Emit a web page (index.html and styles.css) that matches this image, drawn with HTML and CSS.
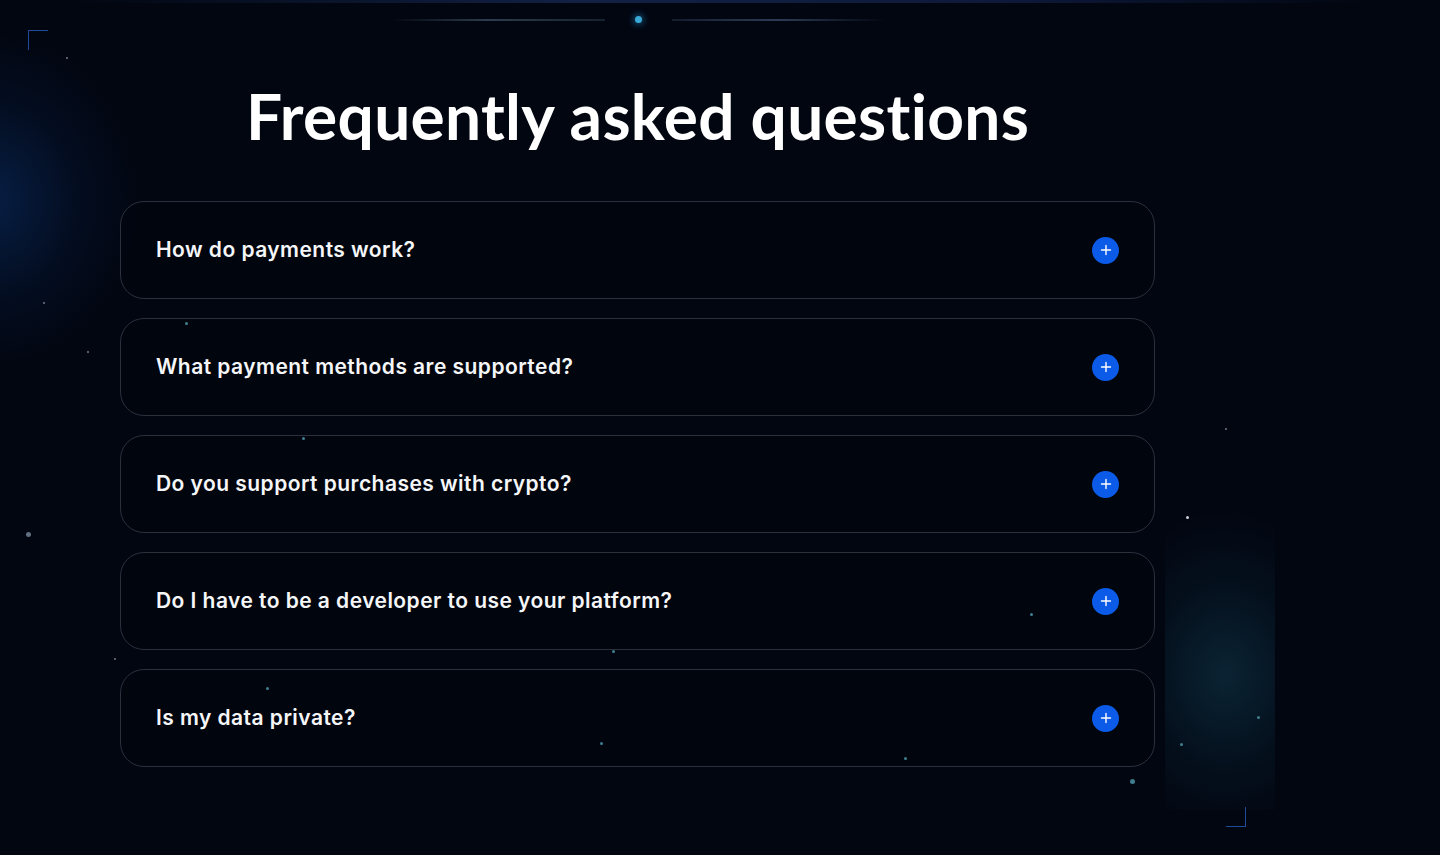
FILE: index.html
```html
<!DOCTYPE html>
<html lang="en">
<head>
<meta charset="utf-8">
<title>FAQ</title>
<link rel="stylesheet" href="styles.css">
</head>
<body>
<div class="page">
  <div class="topline"></div>
  <div class="glow glow-left"></div>
  <div class="glow glow-right"></div>
  <div class="deco-top">
    <span class="dline dline-l"></span>
    <span class="ddot"></span>
    <span class="dline dline-r"></span>
  </div>
  <span class="corner corner-tl"></span>
  <span class="corner corner-br"></span>

  <main class="faq">
    <h1 class="title">Frequently asked questions</h1>
    <ul class="list">
      <li class="item"><span class="q">How do payments work?</span><span class="plus"><svg viewBox="0 0 12 12" width="12" height="12"><path d="M6 1.5v9M1.5 6h9" stroke="#fff" stroke-width="1.4" stroke-linecap="round"/></svg></span></li>
      <li class="item"><span class="q">What payment methods are supported?</span><span class="plus"><svg viewBox="0 0 12 12" width="12" height="12"><path d="M6 1.5v9M1.5 6h9" stroke="#fff" stroke-width="1.4" stroke-linecap="round"/></svg></span></li>
      <li class="item"><span class="q">Do you support purchases with crypto?</span><span class="plus"><svg viewBox="0 0 12 12" width="12" height="12"><path d="M6 1.5v9M1.5 6h9" stroke="#fff" stroke-width="1.4" stroke-linecap="round"/></svg></span></li>
      <li class="item"><span class="q">Do I have to be a developer to use your platform?</span><span class="plus"><svg viewBox="0 0 12 12" width="12" height="12"><path d="M6 1.5v9M1.5 6h9" stroke="#fff" stroke-width="1.4" stroke-linecap="round"/></svg></span></li>
      <li class="item"><span class="q">Is my data private?</span><span class="plus"><svg viewBox="0 0 12 12" width="12" height="12"><path d="M6 1.5v9M1.5 6h9" stroke="#fff" stroke-width="1.4" stroke-linecap="round"/></svg></span></li>
    </ul>
  </main>

  <span class="star" style="left:66px;top:57px"></span>
  <span class="star" style="left:43px;top:302px"></span>
  <span class="star" style="left:87px;top:351px"></span>
  <span class="star star-cyan" style="left:185px;top:322px"></span>
  <span class="star star-cyan" style="left:302px;top:437px"></span>
  <span class="star star-big" style="left:26px;top:532px"></span>
  <span class="star" style="left:114px;top:658px"></span>
  <span class="star star-cyan" style="left:266px;top:687px"></span>
  <span class="star star-cyan" style="left:612px;top:650px"></span>
  <span class="star star-cyan" style="left:600px;top:742px"></span>
  <span class="star star-cyan" style="left:904px;top:757px"></span>
  <span class="star star-cyan" style="left:1030px;top:613px"></span>
  <span class="star star-white" style="left:1186px;top:516px"></span>
  <span class="star" style="left:1225px;top:428px"></span>
  <span class="star star-cyan" style="left:1257px;top:716px"></span>
  <span class="star star-cyan" style="left:1180px;top:743px"></span>
  <span class="star star-big star-cyan" style="left:1130px;top:779px"></span>
</div>
</body>
</html>
```
FILE: styles.css
```css
* { box-sizing: border-box; }
html, body { margin: 0; padding: 0; }
body {
  background: #020611;
  font-family: "Inter", "Lato", sans-serif;
  color: #fff;
}
.page {
  position: relative;
  width: 1440px;
  height: 855px;
  overflow: hidden;
  background: #020611;
}
.topline {
  position: absolute;
  left: 0; top: 0;
  width: 1440px; height: 3px;
  background: linear-gradient(90deg, rgba(20,40,90,0) 5%, rgba(30,55,110,0.55) 40%, rgba(25,45,100,0.5) 70%, rgba(20,40,90,0) 95%);
}
.glow { position: absolute; pointer-events: none; }
.glow-left {
  left: -160px; top: 30px;
  width: 300px; height: 340px;
  background: radial-gradient(ellipse at center, rgba(10,50,110,0.55) 0%, rgba(8,35,80,0.25) 40%, rgba(2,6,17,0) 70%);
}
.glow-right {
  left: 1165px; top: 510px;
  width: 110px; height: 300px;
  background: radial-gradient(ellipse 120% 55% at 55% 55%, rgba(14,48,66,0.7) 0%, rgba(8,30,46,0.4) 55%, rgba(2,6,17,0) 100%);
}
.deco-top {
  position: absolute;
  left: 380px; top: 14px;
  width: 515px; height: 11px;
  display: flex;
  align-items: center;
}
.dline { display: block; height: 2px; }
.dline-l {
  width: 215px; margin-left: 10px;
  background: linear-gradient(90deg, rgba(60,80,100,0) 0%, rgba(80,105,125,0.55) 45%, rgba(60,85,105,0.35) 100%);
}
.ddot {
  width: 7px; height: 7px; border-radius: 50%;
  background: #3aa9d6;
  box-shadow: 0 0 6px 2px rgba(40,150,210,0.45);
  margin-left: 30px;
}
.dline-r {
  width: 213px; margin-left: 30px;
  background: linear-gradient(90deg, rgba(60,80,110,0.3) 0%, rgba(80,105,140,0.55) 50%, rgba(60,80,110,0) 100%);
}
.corner { position: absolute; width: 20px; height: 20px; }
.corner-tl {
  left: 28px; top: 30px;
  border-left: 1px solid #1d4b9a;
  border-top: 1px solid #1d4b9a;
}
.corner-br {
  left: 1226px; top: 807px;
  border-right: 1px solid #1d4b9a;
  border-bottom: 1px solid #1d4b9a;
}
.star {
  position: absolute;
  z-index: 2;
  width: 2px; height: 2px; border-radius: 50%;
  background: #6b7a90;
}
.star-cyan { width: 3px; height: 3px; background: #3f7f8f; }
.star-white { width: 3px; height: 3px; background: #c8d0dc; }
.star-big { width: 5px; height: 5px; background: #5f6f80; }
.star-big.star-cyan { background: #3f7d8d; }

.faq {
  position: relative;
  z-index: 1;
  width: 1035px;
  margin-left: 120px;
  padding-top: 82px;
}
.title {
  margin: 0 0 51px 0;
  text-align: center;
  font-family: "Lato", "Inter", sans-serif;
  font-size: 64px;
  font-weight: 700;
  line-height: 68px;
  letter-spacing: 0.3px;
  color: #fff;
}
.list {
  list-style: none;
  margin: 0; padding: 0;
  display: flex;
  flex-direction: column;
  gap: 19px;
}
.item {
  height: 98px;
  border: 1px solid #2b303c;
  border-radius: 24px;
  background: rgba(2, 5, 14, 0.6);
  display: flex;
  align-items: center;
  justify-content: space-between;
  padding: 0 35px 0 35px;
}
.q {
  font-size: 21px;
  font-weight: 600;
  letter-spacing: 0.45px;
  color: #f5f6f8;
  margin-top: -2px;
}
.plus {
  width: 27px; height: 27px;
  border-radius: 50%;
  background: #0b5be8;
  display: flex;
  align-items: center;
  justify-content: center;
}
.plus svg { display: block; }
```
